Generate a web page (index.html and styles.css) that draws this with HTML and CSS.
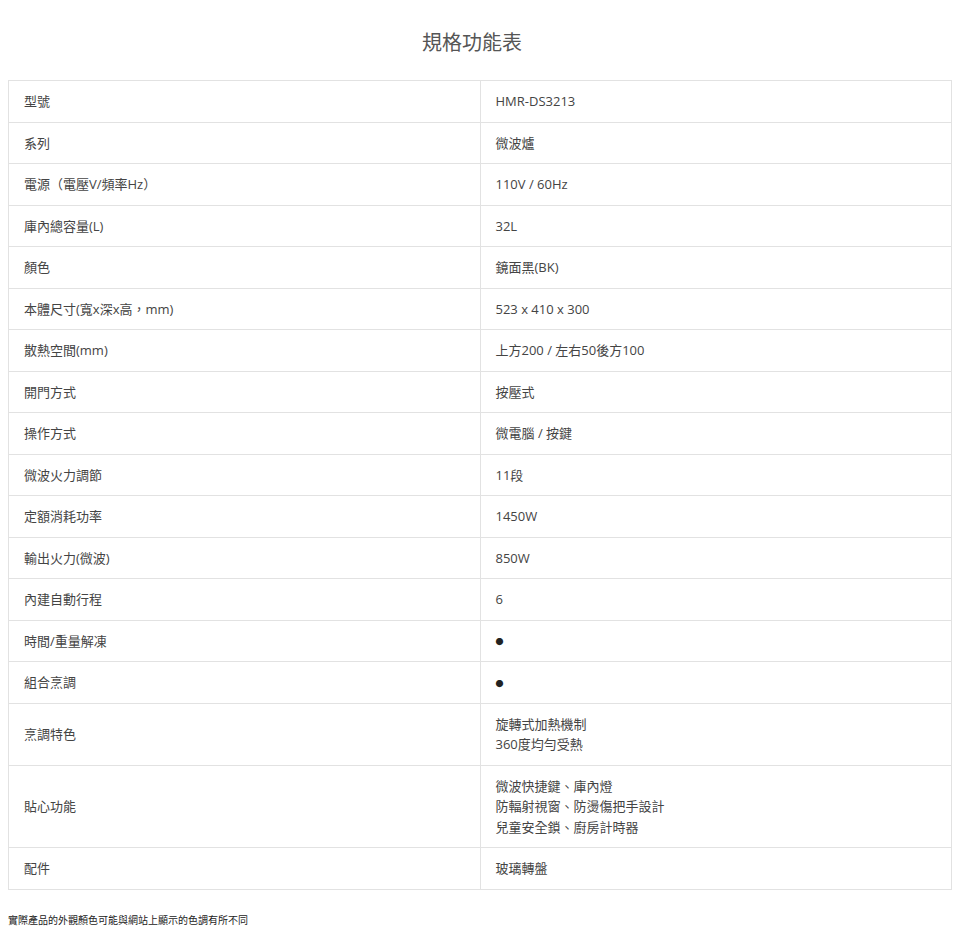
FILE: index.html
```html
<!DOCTYPE html>
<html lang="zh-Hant">
<head>
<meta charset="utf-8">
<title>規格功能表</title>
<link rel="stylesheet" href="styles.css">
</head>
<body>
<h2 class="title">規格功能表</h2>
<table class="spec">
<tbody>
<tr><td>型號</td><td>HMR-DS3213</td></tr>
<tr><td>系列</td><td>微波爐</td></tr>
<tr><td>電源（電壓V/頻率Hz）</td><td>110V / 60Hz</td></tr>
<tr><td>庫內總容量(L)</td><td>32L</td></tr>
<tr><td>顏色</td><td>鏡面黑(BK)</td></tr>
<tr><td>本體尺寸(寬x深x高，mm)</td><td>523 x 410 x 300</td></tr>
<tr><td>散熱空間(mm)</td><td>上方200 / 左右50後方100</td></tr>
<tr><td>開門方式</td><td>按壓式</td></tr>
<tr><td>操作方式</td><td>微電腦 / 按鍵</td></tr>
<tr><td>微波火力調節</td><td>11段</td></tr>
<tr><td>定額消耗功率</td><td>1450W</td></tr>
<tr><td>輸出火力(微波)</td><td>850W</td></tr>
<tr><td>內建自動行程</td><td>6</td></tr>
<tr><td>時間/重量解凍</td><td><span class="dot">●</span></td></tr>
<tr><td>組合烹調</td><td><span class="dot">●</span></td></tr>
<tr><td>烹調特色</td><td>旋轉式加熱機制<br>360度均勻受熱</td></tr>
<tr><td>貼心功能</td><td>微波快捷鍵、庫內燈<br>防輻射視窗、防燙傷把手設計<br>兒童安全鎖、廚房計時器</td></tr>
<tr><td>配件</td><td>玻璃轉盤</td></tr>
</tbody>
</table>
<p class="note">實際產品的外觀顏色可能與網站上顯示的色調有所不同</p>
</body>
</html>
```
FILE: styles.css
```css
html, body {
  margin: 0;
  padding: 0;
  background: #fff;
}
body {
  padding: 0 8px;
  font-family: "Open Sans", "Noto Sans CJK TC", sans-serif;
  color: #444;
}
.title {
  margin: 0;
  padding: 30px 16px 0 0;
  height: 80px;
  box-sizing: border-box;
  text-align: center;
  font-size: 20px;
  font-weight: normal;
  line-height: 26px;
  color: #555;
}
.spec {
  width: 100%;
  border-collapse: collapse;
  table-layout: fixed;
  font-size: 13px;
}
.spec td {
  width: 50%;
  border: 1px solid #e2e2e2;
  padding: 10px 15px 10px 15px;
  line-height: 20.5px;
  vertical-align: middle;
  color: #444;
}
.dot {
  font-size: 8px;
  color: #222;
  display: inline-block;
  vertical-align: middle;
  line-height: 8px;
}
.note {
  margin: 24px 0 0 0;
  font-size: 10px;
  line-height: 12px;
  color: #222;
}
```
